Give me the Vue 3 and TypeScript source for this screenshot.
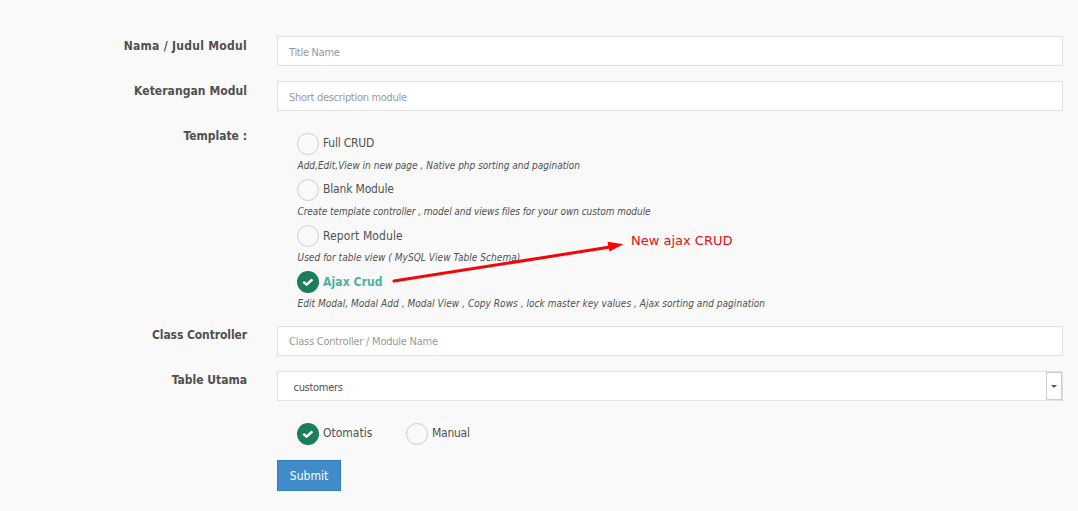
<script setup lang="ts">
import { ref } from 'vue'

interface TemplateOption {
  id: string
  label: string
  hint: string
}

const templates: TemplateOption[] = [
  { id: 'full', label: 'Full CRUD', hint: 'Add,Edit,View in new page , Native php sorting and pagination' },
  { id: 'blank', label: 'Blank Module', hint: 'Create template controller , model and views files for your own custom module' },
  { id: 'report', label: 'Report Module', hint: 'Used for table view ( MySQL View Table Schema)' },
  { id: 'ajax', label: 'Ajax Crud', hint: 'Edit Modal, Modal Add , Modal View , Copy Rows , lock master key values , Ajax sorting and pagination' },
]
const modes = ['Otomatis', 'Manual']

const template = ref('ajax')
const mode = ref('Otomatis')
const title = ref('')
const description = ref('')
const controller = ref('')
</script>

<template>
  <form class="page" @submit.prevent>
    <div class="row">
      <label class="name low l-title">Nama / Judul Modul</label>
      <input v-model="title" class="control p-title" placeholder="Title Name" />
    </div>
    <div class="row">
      <label class="name low l-desc">Keterangan Modul</label>
      <input v-model="description" class="control p-desc" placeholder="Short description module" />
    </div>
    <div class="row templates">
      <label class="name low">Template :</label>
      <div class="options">
        <div v-for="t in templates" :key="t.id" class="option" :class="'o-' + t.id">
          <div class="choice" :class="{ chosen: template === t.id }" @click="template = t.id">
            <span class="dot" :class="{ on: template === t.id }">
              <svg v-if="template === t.id" viewBox="0 0 22 22"><path d="M6.3 10.9 L9.6 13.7 L15.4 8.3" /></svg>
            </span>
            <span class="text">{{ t.label }}</span>
          </div>
          <div class="hint"><i>{{ t.hint }}</i></div>
        </div>
      </div>
    </div>
    <div class="row">
      <label class="name l-class">Class Controller</label>
      <input v-model="controller" class="control p-class" placeholder="Class Controller / Module Name" />
    </div>
    <div class="row">
      <label class="name">Table Utama</label>
      <div class="control select">
        <span>customers</span>
        <span class="toggle"><i class="caret"></i></span>
      </div>
    </div>
    <div class="modes">
      <div v-for="m in modes" :key="m" class="choice" :class="'m-' + m.toLowerCase()" @click="mode = m">
        <span class="dot" :class="{ on: mode === m }">
          <svg v-if="mode === m" viewBox="0 0 22 22"><path d="M6.3 10.9 L9.6 13.7 L15.4 8.3" /></svg>
        </span>
        <span class="text">{{ m }}</span>
      </div>
    </div>
    <button class="submit" type="submit"><span>Submit</span></button>

    <svg class="arrow" viewBox="0 0 240 50">
      <path class="shaft" d="M6 41 L222 7.1" />
      <path class="head" d="M219.5 1.8 L235.4 4.3 L221.5 11.4 Z" />
    </svg>
    <span class="note">New ajax CRUD</span>
  </form>
</template>

<style>
body {
  background: #f9f9f9;
}
</style>

<style scoped>
.page {
  position: relative;
  box-sizing: border-box;
  width: 1078px;
  height: 511px;
  padding: 36px 15px 0 0;
  overflow: hidden;
  background: #f9f9f9;
  color: #505050;
  font-family: "DejaVu Sans Condensed", "DejaVu Sans", sans-serif;
  font-stretch: condensed;
  font-size: 12px;
}
.row {
  display: flex;
  height: 30px;
  margin-bottom: 15px;
}
.name {
  box-sizing: border-box;
  flex: none;
  width: 247px;
  margin-right: 30px;
  line-height: 18px;
  text-align: right;
  font-weight: bold;
  white-space: nowrap;
}
.name.low {
  padding-top: 1px;
}
.l-title {
  letter-spacing: 0.29px;
}
.l-desc {
  letter-spacing: 0.06px;
}
.l-class {
  letter-spacing: -0.09px;
}
.control {
  box-sizing: border-box;
  flex: 1;
  min-width: 0;
  height: 30px;
  padding: 2px 11px 0;
  border: 1px solid #e2e2e4;
  border-radius: 0;
  outline: 0;
  background: #fff;
  color: #505050;
  font-family: inherit;
  font-stretch: inherit;
  font-size: 11px;
  letter-spacing: -0.3px;
}
.control.p-class {
  padding-top: 1px;
  letter-spacing: -0.23px;
}
.control::placeholder {
  color: #999;
  opacity: 1;
}
.row.templates {
  height: 185px;
}
.options {
  padding: 7px 0 0 20px;
}
.option {
  height: 46px;
}
.choice {
  display: flex;
  height: 22px;
  cursor: pointer;
}
.dot {
  box-sizing: border-box;
  flex: none;
  width: 22px;
  height: 22px;
  margin-right: 4px;
  border: 1px solid #d0cdd0;
  border-radius: 50%;
}
.dot.on {
  border: 0;
  background: #1b7e5a;
}
.dot svg {
  display: block;
  width: 22px;
  height: 22px;
  fill: none;
  stroke: #fff;
  stroke-width: 2.5;
}
.text {
  line-height: 20px;
  white-space: nowrap;
}
.chosen .text {
  color: #4bb1a5;
  font-weight: bold;
}
.hint {
  height: 24px;
  padding-left: 0.5px;
  line-height: 21px;
  font-size: 10px;
  white-space: nowrap;
}
.o-full .text {
  letter-spacing: -0.22px;
}
.o-blank .text {
  letter-spacing: -0.17px;
}
.o-blank .hint {
  letter-spacing: -0.06px;
}
.o-report .text,
.o-ajax .text {
  line-height: 22px;
  letter-spacing: 0.11px;
}
.o-report .hint {
  letter-spacing: 0.05px;
}
.o-ajax .hint {
  letter-spacing: 0.04px;
}
.m-manual .text {
  letter-spacing: -0.25px;
}
.select {
  display: flex;
  justify-content: space-between;
  padding: 0 0 0 15.5px;
  line-height: 30px;
}
.toggle {
  box-sizing: border-box;
  display: flex;
  align-items: center;
  justify-content: center;
  width: 16px;
  height: 28px;
  border: 1px solid #ccc;
}
.caret {
  border: 3px solid transparent;
  border-top-color: #555;
  border-bottom: 0;
}
.modes {
  display: flex;
  padding: 7px 0 0 297px;
}
.modes .choice {
  width: 109px;
}
.submit {
  display: block;
  box-sizing: border-box;
  width: 64px;
  height: 31px;
  margin: 15px 0 0 277px;
  padding: 0;
  border: 1px solid #357ebd;
  background: #428bca;
  color: #fff;
  font-family: inherit;
  font-stretch: inherit;
  font-size: 12px;
}
.arrow {
  position: absolute;
  left: 388px;
  top: 240px;
  width: 240px;
  height: 50px;
}
.shaft {
  fill: none;
  stroke: #f00808;
  stroke-width: 3;
  stroke-linecap: round;
}
.head {
  fill: #f00;
}
.note {
  position: absolute;
  left: 631px;
  top: 232px;
  color: #e31010;
  font-family: "DejaVu Sans", sans-serif;
  font-stretch: normal;
  font-size: 13px;
  line-height: 17px;
  white-space: nowrap;
}
.select > span:first-child {
  padding-top: 0.5px;
}
</style>
